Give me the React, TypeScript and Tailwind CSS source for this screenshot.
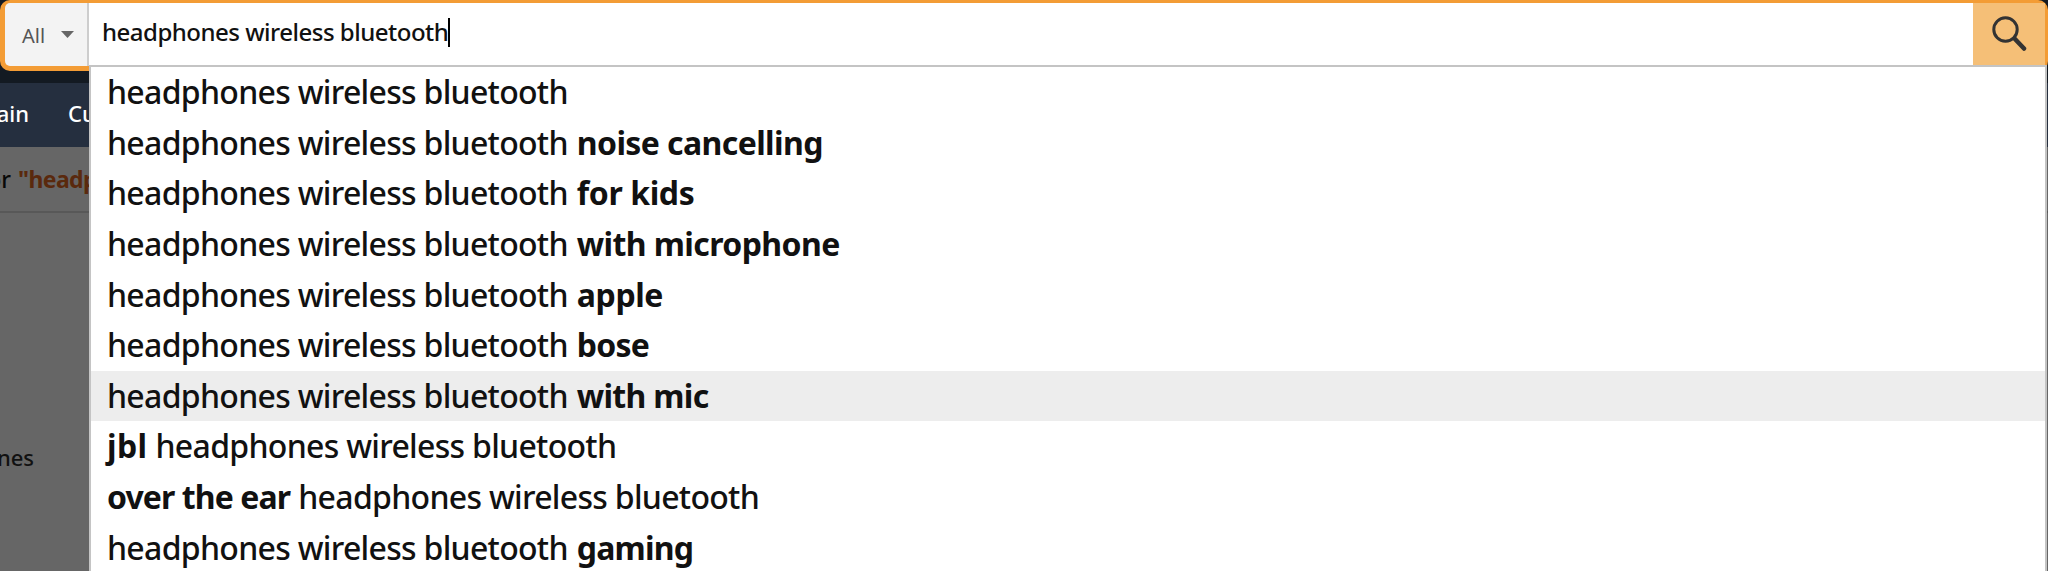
import React from 'react';

interface Part {
  text: string;
  bold?: boolean;
  className?: string;
}

interface Suggestion {
  parts: Part[];
  active?: boolean;
}

const query = 'headphones wireless bluetooth';

const suggestions: Suggestion[] = [
  { parts: [{ text: query }] },
  { parts: [{ text: query }, { text: 'noise cancelling', bold: true, className: 'tracking-[-0.6px]' }] },
  { parts: [{ text: query }, { text: 'for kids', bold: true, className: 'tracking-[-0.4px]' }] },
  { parts: [{ text: query }, { text: 'with microphone', bold: true, className: 'tracking-[-0.6px]' }] },
  { parts: [{ text: query }, { text: 'apple', bold: true, className: 'tracking-[-0.4px]' }] },
  { parts: [{ text: query }, { text: 'bose', bold: true, className: 'tracking-[-0.8px]' }] },
  { parts: [{ text: query }, { text: 'with mic', bold: true, className: 'tracking-[-0.7px]' }], active: true },
  { parts: [{ text: 'jbl', bold: true, className: 'mr-[8px] tracking-[0.4px]' }, { text: query }] },
  { parts: [{ text: 'over the ear', bold: true, className: 'mr-[8px] tracking-[-0.9px]' }, { text: query }] },
  { parts: [{ text: query }, { text: 'gaming', bold: true, className: 'tracking-[-0.8px]' }] },
];

function SearchBar() {
  return (
    <div className="flex h-[71px] rounded-[10px] border-t-[3px] border-r-[3px] border-b-[5px] border-l-[5px] border-[#f39c35] bg-[#f39c35]">
      <button className="flex h-[63px] w-[84px] shrink-0 items-center rounded-l-[5px] border-r-2 border-[#cdcdcd] bg-[#f3f3f3] pl-[17px] text-[#555]">
        <span className="w-[39px] pt-[2px] text-left text-[20px] leading-none">All</span>
        <svg className="h-[7px] w-[13px]" viewBox="0 0 13 7" fill="#666">
          <path d="M0 0h13L6.500 7z" />
        </svg>
      </button>
      <div className="flex h-[62px] flex-1 items-center bg-white pl-[13px] pb-[4px]">
        <span className="text-[24px] leading-none font-medium tracking-[-0.5px] whitespace-nowrap text-[#111]">{query}</span>
        <span className="h-[29px] w-[2px] bg-black" />
      </div>
      <button className="flex h-[62px] w-[72px] shrink-0 items-center justify-center bg-[#f5bf77]">
        <svg className="h-[36px] w-[36px]" viewBox="0 0 36 36" fill="none" stroke="#333" strokeLinecap="round">
          <circle cx="14.500" cy="13.500" r="11.700" strokeWidth="3" />
          <path d="M23.500 22.500L33 32.500" strokeWidth="4.500" />
        </svg>
      </button>
    </div>
  );
}

function Suggestions() {
  return (
    <ul className="absolute top-[65px] right-[1px] left-[89px] h-[520px] border-2 border-[#c4c4c4] bg-white">
      {suggestions.map((item, i) => (
        <li
          key={i}
          className={`flex h-[50.6px] items-center pl-[16px] text-[32px] leading-none whitespace-nowrap text-[#111] ${
            item.active ? 'bg-[#ededed]' : ''
          }`}
        >
          {item.parts.map((part, j) => (
            <span
              key={j}
              className={part.bold ? `font-bold ${part.className}` : 'mr-[9px] font-medium tracking-[-0.7px]'}
            >
              {part.text}
            </span>
          ))}
        </li>
      ))}
    </ul>
  );
}

function App() {
  return (
    <div className="relative h-[571px] w-full overflow-hidden bg-[#666] font-['Noto_Sans',sans-serif]">
      <header className="h-[83px] bg-[#131a22]">
        <SearchBar />
      </header>
      <nav className="flex h-[64px] items-center bg-[#252f3f] pb-[3px] text-[22px] font-medium text-white">
        <span className="flex w-[29px] justify-end">ain</span>
        <span className="ml-[39px]">Cu</span>
      </nav>
      <div className="flex h-[66px] items-center gap-[7px] border-b-2 border-[#585858] pt-px text-[23px] whitespace-nowrap text-[#080808]">
        <span className="flex w-[11px] justify-end font-medium">or</span>
        <span className="font-bold tracking-[-0.6px] text-[#5a290d]">"headp</span>
      </div>
      <div className="mt-[228px] flex w-[34px] justify-end text-[22px] font-medium text-[#111]">nes</div>
      <Suggestions />
    </div>
  );
}

export default App;
